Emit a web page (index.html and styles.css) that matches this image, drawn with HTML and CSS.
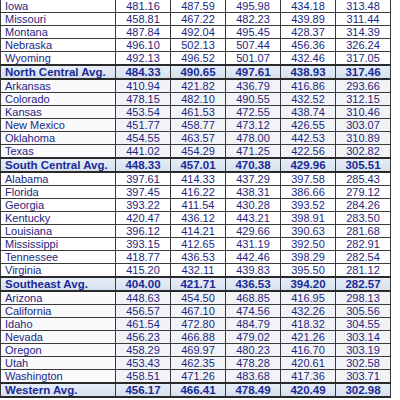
FILE: index.html
```html
<!DOCTYPE html>
<html lang="en">
<head>
  <meta charset="UTF-8" />
  <title>Regional Averages</title>
  <link rel="stylesheet" href="styles.css">
</head>
<body>
  <table class="scores">
    <colgroup>
      <col class="col-name">
      <col class="col-num"><col class="col-num"><col class="col-num"><col class="col-num"><col class="col-num">
    </colgroup>
    <tbody>
      <tr><td>Iowa</td><td>481.16</td><td>487.59</td><td>495.98</td><td>434.18</td><td>313.48</td></tr>
      <tr><td>Missouri</td><td>458.81</td><td>467.22</td><td>482.23</td><td>439.89</td><td>311.44</td></tr>
      <tr><td>Montana</td><td>487.84</td><td>492.04</td><td>495.45</td><td>428.37</td><td>314.39</td></tr>
      <tr><td>Nebraska</td><td>496.10</td><td>502.13</td><td>507.44</td><td>456.36</td><td>326.24</td></tr>
      <tr><td>Wyoming</td><td>492.13</td><td>496.52</td><td>501.07</td><td>432.46</td><td>317.05</td></tr>
      <tr class="avg"><td>North Central Avg.</td><td>484.33</td><td>490.65</td><td>497.61</td><td>438.93</td><td>317.46</td></tr>
    </tbody>
    <tbody class="shaded">
      <tr><td>Arkansas</td><td>410.94</td><td>421.82</td><td>436.79</td><td>416.86</td><td>293.66</td></tr>
      <tr><td>Colorado</td><td>478.15</td><td>482.10</td><td>490.55</td><td>432.52</td><td>312.15</td></tr>
      <tr><td>Kansas</td><td>453.54</td><td>461.53</td><td>472.55</td><td>438.74</td><td>310.46</td></tr>
      <tr><td>New Mexico</td><td>451.77</td><td>458.77</td><td>473.12</td><td>426.55</td><td>303.07</td></tr>
      <tr><td>Oklahoma</td><td>454.55</td><td>463.57</td><td>478.00</td><td>442.53</td><td>310.89</td></tr>
      <tr><td>Texas</td><td>441.02</td><td>454.29</td><td>471.25</td><td>422.56</td><td>302.82</td></tr>
      <tr class="avg"><td>South Central Avg.</td><td>448.33</td><td>457.01</td><td>470.38</td><td>429.96</td><td>305.51</td></tr>
    </tbody>
    <tbody>
      <tr><td>Alabama</td><td>397.61</td><td>414.33</td><td>437.29</td><td>397.58</td><td>285.43</td></tr>
      <tr><td>Florida</td><td>397.45</td><td>416.22</td><td>438.31</td><td>386.66</td><td>279.12</td></tr>
      <tr><td>Georgia</td><td>393.22</td><td>411.54</td><td>430.28</td><td>393.52</td><td>284.26</td></tr>
      <tr><td>Kentucky</td><td>420.47</td><td>436.12</td><td>443.21</td><td>398.91</td><td>283.50</td></tr>
      <tr><td>Louisiana</td><td>396.12</td><td>414.21</td><td>429.66</td><td>390.63</td><td>281.68</td></tr>
      <tr><td>Mississippi</td><td>393.15</td><td>412.65</td><td>431.19</td><td>392.50</td><td>282.91</td></tr>
      <tr><td>Tennessee</td><td>418.77</td><td>436.53</td><td>442.46</td><td>398.29</td><td>282.54</td></tr>
      <tr><td>Virginia</td><td>415.20</td><td>432.11</td><td>439.83</td><td>395.50</td><td>281.12</td></tr>
      <tr class="avg"><td>Southeast Avg.</td><td>404.00</td><td>421.71</td><td>436.53</td><td>394.20</td><td>282.57</td></tr>
    </tbody>
    <tbody class="shaded">
      <tr><td>Arizona</td><td>448.63</td><td>454.50</td><td>468.85</td><td>416.95</td><td>298.13</td></tr>
      <tr><td>California</td><td>456.57</td><td>467.10</td><td>474.56</td><td>432.26</td><td>305.56</td></tr>
      <tr><td>Idaho</td><td>461.54</td><td>472.80</td><td>484.79</td><td>418.32</td><td>304.55</td></tr>
      <tr><td>Nevada</td><td>456.23</td><td>466.88</td><td>479.02</td><td>421.26</td><td>303.14</td></tr>
      <tr><td>Oregon</td><td>458.29</td><td>469.97</td><td>480.23</td><td>416.70</td><td>303.19</td></tr>
      <tr><td>Utah</td><td>453.43</td><td>462.35</td><td>478.28</td><td>420.61</td><td>302.58</td></tr>
      <tr><td>Washington</td><td>458.51</td><td>471.26</td><td>483.68</td><td>417.36</td><td>303.71</td></tr>
      <tr class="avg"><td>Western Avg.</td><td>456.17</td><td>466.41</td><td>478.49</td><td>420.49</td><td>302.98</td></tr>
    </tbody>
  </table>
</body>
</html>
```

FILE: styles.css
```css
* {
  margin: 0;
  padding: 0;
  box-sizing: border-box;
}

body {
  background-color: #ffffff;
  font-family: 'Liberation Sans', Arial, sans-serif;
  font-size: 11px;
  color: #1d2680;
}

.scores {
  width: 391px;
  margin-top: -1px;
  border-collapse: collapse;
  table-layout: fixed;
}
.col-name {
  width: 115px;
}
.col-num {
  width: 55px;
}

.scores td {
  height: 13px;
  padding: 0 4px;
  border: 1px solid #3a3a3a;
  line-height: 12px;
  text-align: center;
  white-space: nowrap;
}
.scores td:first-child {
  text-align: left;
}

.shaded td {
  background-color: #f2f3f6;
}
.shaded td:first-child {
  background-color: #fafafc;
}

.avg td {
  height: 14px;
  border-top: 2px solid #2a2a2a;
  border-bottom: 2px solid #2a2a2a;
  background: linear-gradient(to bottom, #e6edf6, #d6e0ee);
  color: #1a2a96;
  font-weight: bold;
  font-size: 11.5px;
}
.shaded .avg td,
.shaded .avg td:first-child {
  background: linear-gradient(to bottom, #e6edf6, #d6e0ee);
}
```
